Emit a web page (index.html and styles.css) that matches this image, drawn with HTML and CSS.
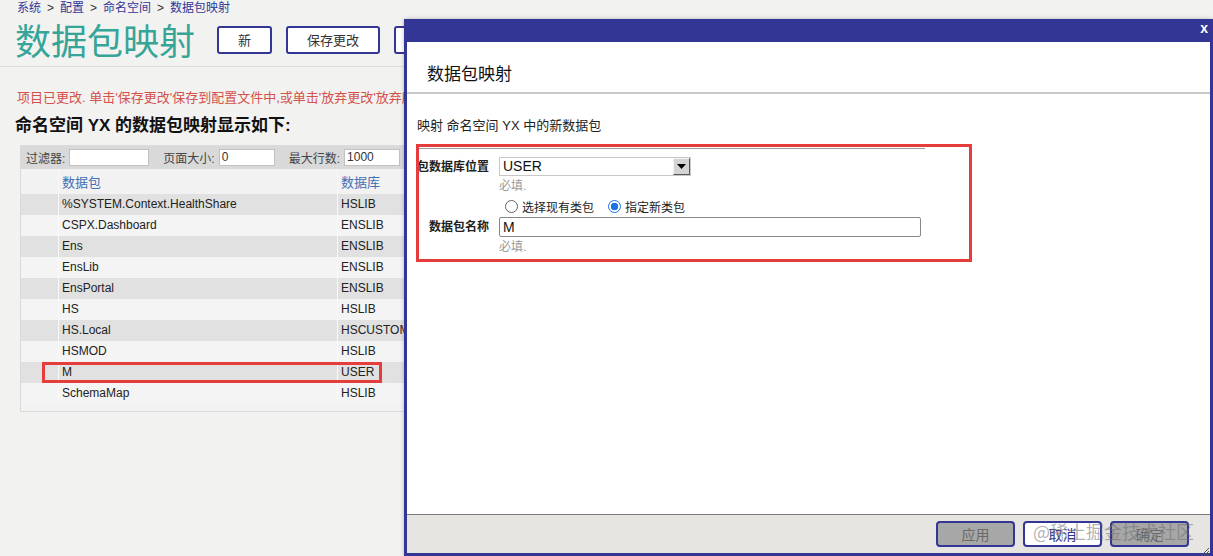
FILE: index.html
```html
<!DOCTYPE html>
<html lang="zh">
<head>
<meta charset="utf-8">
<title>数据包映射</title>
<link rel="stylesheet" href="styles.css">
</head>
<body>
<div class="page">
  <div class="crumbs"><a>系统</a><span class="sep">&gt;</span><a>配置</a><span class="sep">&gt;</span><a>命名空间</a><span class="sep">&gt;</span><a>数据包映射</a></div>
  <div class="titlebar">
    <h1 class="title">数据包映射</h1>
    <div class="tbtns">
      <button class="tbtn">新</button>
      <button class="tbtn">保存更改</button>
      <button class="tbtn">放弃更改</button>
    </div>
  </div>
  <div class="msg">项目已更改. 单击'保存更改'保存到配置文件中,或单击'放弃更改'放弃所有更改.</div>
  <h2 class="subhead">命名空间 YX 的数据包映射显示如下:</h2>
  <div class="panel">
    <div class="filterbar">
      <span class="flabel">过滤器:</span><span class="finput f1"></span>
      <span class="flabel">页面大小:</span><span class="finput f2">0</span>
      <span class="flabel">最大行数:</span><span class="finput f3">1000</span>
    </div>
    <div class="grid">
      <div class="row head"><div class="c0"></div><div class="c1">数据包</div><div class="c2">数据库</div></div>
      <div class="row odd"><div class="c0"></div><div class="c1">%SYSTEM.Context.HealthShare</div><div class="c2">HSLIB</div></div>
      <div class="row"><div class="c0"></div><div class="c1">CSPX.Dashboard</div><div class="c2">ENSLIB</div></div>
      <div class="row odd"><div class="c0"></div><div class="c1">Ens</div><div class="c2">ENSLIB</div></div>
      <div class="row"><div class="c0"></div><div class="c1">EnsLib</div><div class="c2">ENSLIB</div></div>
      <div class="row odd"><div class="c0"></div><div class="c1">EnsPortal</div><div class="c2">ENSLIB</div></div>
      <div class="row"><div class="c0"></div><div class="c1">HS</div><div class="c2">HSLIB</div></div>
      <div class="row odd"><div class="c0"></div><div class="c1">HS.Local</div><div class="c2">HSCUSTOM</div></div>
      <div class="row"><div class="c0"></div><div class="c1">HSMOD</div><div class="c2">HSLIB</div></div>
      <div class="row odd"><div class="c0"></div><div class="c1">M</div><div class="c2">USER</div></div>
      <div class="row"><div class="c0"></div><div class="c1">SchemaMap</div><div class="c2">HSLIB</div></div>
    </div>
    <div class="mark mark-row"></div>
  </div>
</div>

<div class="dialog">
  <div class="dhead"><span class="dclose">x</span></div>
  <div class="dbody">
    <div class="dtitle">数据包映射</div>
    <div class="dcontent">
      <div class="ddesc">映射 命名空间 YX 中的新数据包</div>
      <div class="dform">
        <div class="frow">
          <label class="flab">包数据库位置</label>
          <div class="fctl">
            <div class="select"><span class="selval">USER</span><span class="selbtn"><svg width="9" height="5" viewBox="0 0 9 5"><path d="M0 0h9L4.5 5z" fill="#000"/></svg></span></div>
            <div class="req">必填.</div>
          </div>
        </div>
        <div class="frow radios">
          <label class="flab"></label>
          <div class="fctl rset">
            <span class="radio"></span><span class="rtext">选择现有类包</span>
            <span class="radio on"></span><span class="rtext">指定新类包</span>
          </div>
        </div>
        <div class="frow">
          <label class="flab">数据包名称</label>
          <div class="fctl">
            <div class="tinput">M</div>
            <div class="req">必填.</div>
          </div>
        </div>
      </div>
    </div>
    <div class="mark mark-form"></div>
  </div>
  <div class="dfoot">
    <button class="dbtn dis">应用</button>
    <button class="dbtn white">取消</button>
    <button class="dbtn dis">确定</button>
    <span class="grip"><svg width="10" height="10" viewBox="0 0 10 10"><path d="M10 2L2 10M10 5L5 10M10 8L8 10" stroke="#555" stroke-width="1"/></svg></span>
    <span class="watermark">@稀土掘金技术社区</span>
  </div>
</div>
</body>
</html>
```

FILE: styles.css
```css
html, body {
  margin: 0;
  padding: 0;
}
body {
  width: 1213px;
  height: 556px;
  overflow: hidden;
  background: #f2f2f1;
  font-family: "Liberation Sans", "Noto Sans CJK SC", sans-serif;
  color: #222;
  position: relative;
}
.page {
  width: 1213px;
}
.crumbs {
  padding: 0 0 0 17px;
  height: 17px;
  line-height: 17px;
  font-size: 12px;
  color: #333695;
  display: flex;
  align-items: center;
  overflow: hidden;
}
.crumbs a {
  color: #333695;
}
.sep {
  margin: 0 6px;
  color: #333;
}
.titlebar {
  display: flex;
  align-items: center;
  padding: 0 0 5px 15px;
  border-bottom: 1px solid #dcdcdc;
}
.title {
  margin: 0 22px 0 0;
  font-size: 36px;
  line-height: 44px;
  font-weight: 400;
  color: #36a598;
  font-family: "Noto Sans CJK SC", sans-serif;
}
.tbtns {
  display: flex;
  gap: 14px;
  margin-top: 2px;
}
.tbtn {
  height: 28px;
  padding: 0 19px;
  border: 2px solid #333695;
  border-radius: 3px;
  background: #fff;
  color: #333;
  font-size: 13px;
  font-family: "Noto Sans CJK SC", sans-serif;
  line-height: 24px;
}
.msg {
  margin: 22px 0 0 17px;
  font-size: 13px;
  line-height: 18px;
  color: #d4514c;
  white-space: nowrap;
}
.subhead {
  margin: 8px 0 0 15px;
  font-size: 17px;
  line-height: 22px;
  font-weight: 700;
  color: #111;
}
.panel {
  position: relative;
  margin: 8px 0 0 20px;
  width: 430px;
  border: 1px solid #dadada;
  background: #f2f2f2;
  padding-bottom: 7px;
}
.filterbar {
  display: flex;
  align-items: center;
  height: 23px;
  background: #d9d9d9;
  padding-left: 5px;
  font-size: 12px;
  color: #444;
}
.flabel {
  margin-right: 4px;
}
.finput {
  height: 17px;
  line-height: 15px;
  background: #fff;
  border: 1px solid #c2c2c2;
  box-sizing: border-box;
  padding-left: 2px;
  font-size: 12px;
  color: #333;
  margin-right: 14px;
}
.f1 { width: 80px; }
.f2 { width: 56px; }
.f3 { width: 56px; }
.grid {
  font-size: 12px;
}
.row {
  display: flex;
  height: 21px;
  line-height: 21px;
  background: #f4f4f4;
  color: #222;
}
.row.odd {
  background: #e1e1e1;
}
.row.head {
  height: 25px;
  line-height: 28px;
  background: #f2f2f2;
  color: #3f6fb4;
  font-size: 13px;
}
.c0 {
  width: 37px;
}
.c1 {
  width: 275px;
  padding-left: 3px;
  border-left: 1px solid #f9f9f9;
}
.c2 {
  flex: 1;
  padding-left: 3px;
  border-left: 1px solid #f9f9f9;
  white-space: nowrap;
}
.mark {
  position: absolute;
  border: 3px solid #e53c3c;
  box-sizing: border-box;
}
.mark-row {
  left: 21px;
  top: 216px;
  width: 340px;
  height: 21px;
}

/* dialog */
.dialog {
  position: absolute;
  left: 404px;
  top: 19px;
  width: 809px;
  height: 537px;
  box-sizing: border-box;
  border: 3px solid #333695;
  border-top: 0;
  background: #fff;
  display: flex;
  flex-direction: column;
  box-shadow: 0 0 4px rgba(0,0,0,0.25);
}
.dhead {
  height: 23px;
  background: #333695;
  position: relative;
}
.dclose {
  position: absolute;
  right: 2px;
  top: 1px;
  color: #fff;
  font-weight: 700;
  font-size: 14px;
  line-height: 16px;
}
.dbody {
  flex: 1;
  position: relative;
  background: #fff;
}
.dtitle {
  height: 52px;
  line-height: 20px;
  padding: 21px 0 0 20px;
  box-sizing: border-box;
  font-size: 17px;
  color: #111;
  font-family: "Noto Sans CJK SC", sans-serif;
  border-bottom: 2px solid #c8c8c8;
}
.dcontent {
  padding: 23px 0 0 10px;
}
.ddesc {
  font-size: 13px;
  line-height: 18px;
  color: #222;
  width: 508px;
  padding-bottom: 13px;
  border-bottom: 1px solid #9a9a9a;
}
.dform {
  padding-top: 8px;
}
.frow {
  display: flex;
}
.flab {
  width: 72px;
  text-align: right;
  font-size: 12px;
  font-weight: 700;
  color: #222;
  margin-right: 10px;
  line-height: 20px;
}
.fctl {
  display: flex;
  flex-direction: column;
}
.select {
  width: 192px;
  height: 19px;
  box-sizing: border-box;
  border: 1px solid #c8c8c8;
  display: flex;
  align-items: center;
  background: #fff;
}
.selval {
  flex: 1;
  font-size: 14px;
  padding-left: 3px;
  color: #111;
  line-height: 17px;
}
.selbtn {
  width: 17px;
  height: 17px;
  box-sizing: border-box;
  background: #d4d4d4;
  border: 1px solid;
  border-color: #f4f4f4 #555 #555 #f4f4f4;
  display: flex;
  align-items: center;
  justify-content: center;
}
.req {
  font-size: 12px;
  line-height: 16px;
  color: #9a9a9a;
  margin-top: 2px;
}
.radios {
  margin-top: 3px;
}
.rset {
  flex-direction: row;
  align-items: center;
  height: 18px;
}
.radio {
  width: 11px;
  height: 11px;
  border-radius: 50%;
  border: 1px solid #666;
  background: #fff;
  margin: 0 4px 0 6px;
}
.radio.on {
  border-color: #1a73e8;
  background: radial-gradient(circle, #1a73e8 0 3.5px, #fff 4px);
  margin-left: 14px;
}
.rtext {
  font-size: 12px;
  color: #222;
}
.radios + .frow {
  margin-top: 2px;
}
.tinput {
  width: 422px;
  height: 20px;
  box-sizing: border-box;
  border: 1px solid #888;
  border-radius: 2px;
  font-size: 14px;
  line-height: 18px;
  padding-left: 3px;
  color: #111;
}
.mark-form {
  left: 9px;
  top: 102px;
  width: 556px;
  height: 118px;
}
.dfoot {
  height: 38px;
  border-top: 1px solid #7a7a7a;
  background: #e6e5e2;
  display: flex;
  justify-content: flex-end;
  align-items: center;
  gap: 8px;
  padding-right: 21px;
  position: relative;
}
.dbtn {
  width: 79px;
  height: 26px;
  border: 2px solid #333695;
  border-radius: 4px;
  font-size: 14px;
  font-family: "Noto Sans CJK SC", sans-serif;
  line-height: 22px;
  padding: 0;
}
.dbtn.dis {
  background: #a7a7a7;
  color: #6a6a6a;
}
.dbtn.white {
  background: #fff;
  color: #333695;
}
.grip {
  position: absolute;
  right: 1px;
  bottom: 1px;
  width: 10px;
  height: 10px;
}
.watermark {
  position: absolute;
  right: 16px;
  top: 3px;
  font-size: 18px;
  line-height: 26px;
  color: rgba(110,110,110,0.55);
  font-family: "Noto Sans CJK SC", sans-serif;
  pointer-events: none;
}
```
